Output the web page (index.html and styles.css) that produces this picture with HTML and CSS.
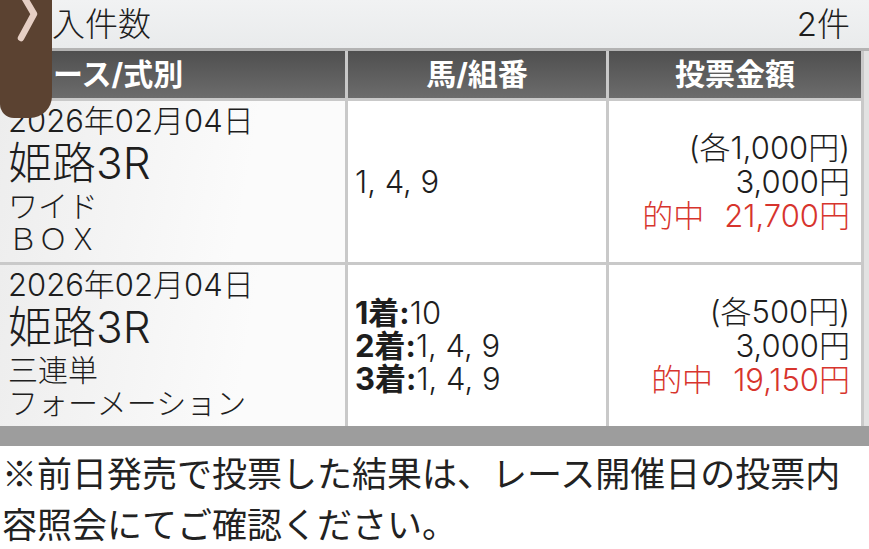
FILE: index.html
```html
<!DOCTYPE html>
<html lang="ja">
<head>
<meta charset="utf-8">
<title>投票内容</title>
<link rel="stylesheet" href="styles.css">
</head>
<body>
<div class="screen">
  <div class="topbar">
    <span class="count-label">購入件数</span>
    <span class="count">2件</span>
  </div>
  <div class="table-wrap">
    <div class="table">
      <div class="th th-left">レース/式別</div>
      <div class="th">馬/組番</div>
      <div class="th">投票金額</div>

      <div class="td race">
        <div class="date">2026年02月04日</div>
        <div class="race-name">姫路3R</div>
        <div class="kind">ワイド</div>
        <div class="kind">ＢＯＸ</div>
      </div>
      <div class="td horses">
        <div>1, 4, 9</div>
      </div>
      <div class="td amount">
        <div>(各1,000円)</div>
        <div>3,000円</div>
        <div class="hit"><span class="hit-label">的中</span>21,700円</div>
      </div>

      <div class="td race">
        <div class="date">2026年02月04日</div>
        <div class="race-name">姫路3R</div>
        <div class="kind">三連単</div>
        <div class="kind">フォーメーション</div>
      </div>
      <div class="td horses">
        <div><b>1着:</b>10</div>
        <div><b>2着:</b>1, 4, 9</div>
        <div><b>3着:</b>1, 4, 9</div>
      </div>
      <div class="td amount">
        <div>(各500円)</div>
        <div>3,000円</div>
        <div class="hit"><span class="hit-label">的中</span>19,150円</div>
      </div>
    </div>
  </div>
  <div class="bar"></div>
  <p class="note">※前日発売で投票した結果は、レース開催日の投票内容照会にてご確認ください。</p>

  <div class="thumb">
    <svg class="chev" width="52" height="48" viewBox="0 0 52 48">
      <path d="M24 -3 L34 14 L21 38" fill="none" stroke="#e6cfc4" stroke-width="6.5" stroke-linecap="round" stroke-linejoin="round"/>
    </svg>
  </div>
</div>
</body>
</html>
```

FILE: styles.css
```css
html, body {
  margin: 0;
  padding: 0;
  background: #ffffff;
}

body {
  font-family: Inter, "Noto Sans CJK JP", "Noto Sans", sans-serif;
  font-weight: 300;
  color: #1e1e1e;
}

.screen {
  position: relative;
  width: 869px;
  height: 549px;
  overflow: hidden;
}

.topbar {
  display: flex;
  justify-content: space-between;
  align-items: center;
  height: 48px;
  padding: 0 19px 0 19px;
  background: linear-gradient(#f1f2f3, #e9ebec);
  border-bottom: 3px solid #b3b3b3;
  font-size: 33px;
  line-height: 48px;
  box-sizing: content-box;
}

.table-wrap {
  background: #e2e2e2;
}

.table {
  width: 861px;
  padding-right: 3px;
  display: grid;
  grid-template-columns: 345px 258px 252px;
  column-gap: 3px;
  row-gap: 3px;
  background: #c9c9c9;
}

.th {
  height: 47px;
  background: linear-gradient(#4f4f4f, #6c6c6c);
  color: #ffffff;
  font-weight: bold;
  font-size: 30px;
  line-height: 47px;
  text-align: center;
}

.th-left {
  text-align: left;
  padding-left: 23px;
}

.td {
  background: #ffffff;
  font-size: 31px;
  line-height: 33px;
}

.race {
  padding: 3px 8px 6px 8px;
  background: linear-gradient(100deg, #ededed, #fbfbfb 70%);
}

.race-name {
  font-size: 44px;
  line-height: 53px;
}

.kind {
  font-size: 30px;
}

.horses {
  display: flex;
  flex-direction: column;
  justify-content: center;
  padding-left: 7px;
}

.horses b {
  font-weight: bold;
}

.amount {
  display: flex;
  flex-direction: column;
  justify-content: center;
  align-items: flex-end;
  padding-right: 11px;
  line-height: 34px;
}

.hit {
  color: #d7342d;
}

.hit-label {
  margin-right: 20px;
}

.bar {
  height: 20px;
  background: #9d9d9d;
}

.note {
  margin: 0;
  padding: 0 0 0 2px;
  font-family: "Noto Sans CJK JP", sans-serif;
  font-weight: 400;
  font-size: 35px;
  line-height: 51px;
  color: #222222;
}

.thumb {
  position: absolute;
  left: 0;
  top: 0;
  width: 52px;
  height: 118px;
  background: #5b4231;
  border-radius: 0 0 22px 14px;
}

.chev {
  display: block;
}
```
